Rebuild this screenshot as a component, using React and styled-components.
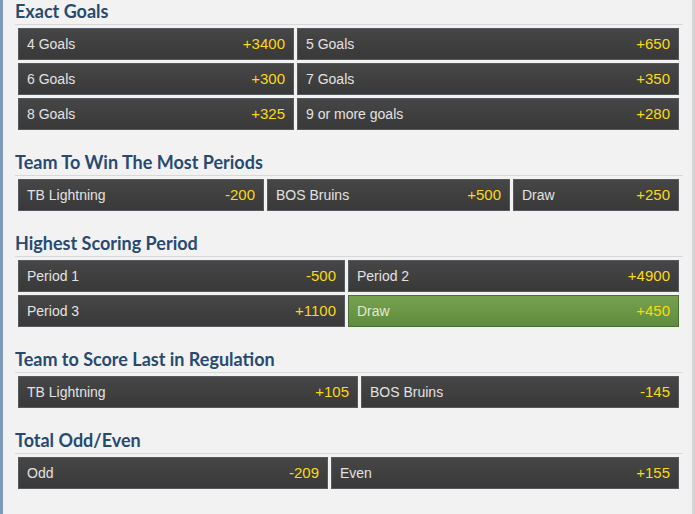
import React from 'react';
import styled, { createGlobalStyle } from 'styled-components';

const GlobalStyle = createGlobalStyle`
  html, body {
    margin: 0;
    padding: 0;
    background: #f2f2f2;
  }
`;

const Page = styled.div`
  width: 695px;
  height: 514px;
  box-sizing: border-box;
  background: #f2f2f2;
  border-left: 3px solid #8099b4;
  border-right: 3px solid #d6d6d6;
  padding: 0 9px 0 12px;
  overflow: hidden;
`;

const Market = styled.section`
  margin-bottom: 21px;
`;

const Title = styled.h2`
  margin: 0 0 3px;
  height: 24px;
  line-height: 23px;
  border-bottom: 1px solid #d8d8d8;
  font-family: 'Lato', 'Open Sans', sans-serif;
  font-weight: 700;
  font-size: 18px;
  color: #284a71;
  white-space: nowrap;
`;

const Grid = styled.div`
  display: grid;
  grid-template-columns: ${(p) => p.cols};
  gap: 3px;
  padding: 0 4px 0 3px;
`;

const Selection = styled.div`
  height: 32px;
  box-sizing: border-box;
  display: flex;
  align-items: center;
  justify-content: space-between;
  padding: 0 8px 1px 8px;
  border: 1px solid ${(p) => (p.$active ? '#4d6e36' : '#555a60')};
  background: ${(p) =>
    p.$active
      ? 'linear-gradient(#76a24f, #5f8b3e)'
      : 'linear-gradient(#464646, #393939)'};
  font-family: 'Liberation Sans', Arial, sans-serif;
  cursor: pointer;
`;

const Label = styled.span`
  font-size: 14px;
  color: ${(p) => (p.$active ? '#e0e9d2' : '#e2e2e2')};
`;

const Odds = styled.span`
  font-size: 15px;
  color: #fad915;
`;

const markets = [
  {
    title: 'Exact Goals',
    cols: '276fr 382fr',
    items: [
      ['4 Goals', '+3400'],
      ['5 Goals', '+650'],
      ['6 Goals', '+300'],
      ['7 Goals', '+350'],
      ['8 Goals', '+325'],
      ['9 or more goals', '+280'],
    ],
  },
  {
    title: 'Team To Win The Most Periods',
    cols: '246fr 243fr 166fr',
    items: [
      ['TB Lightning', '-200'],
      ['BOS Bruins', '+500'],
      ['Draw', '+250'],
    ],
  },
  {
    title: 'Highest Scoring Period',
    cols: '327fr 331fr',
    items: [
      ['Period 1', '-500'],
      ['Period 2', '+4900'],
      ['Period 3', '+1100'],
      ['Draw', '+450', true],
    ],
  },
  {
    title: 'Team to Score Last in Regulation',
    cols: '340fr 318fr',
    items: [
      ['TB Lightning', '+105'],
      ['BOS Bruins', '-145'],
    ],
  },
  {
    title: 'Total Odd/Even',
    cols: '310fr 348fr',
    items: [
      ['Odd', '-209'],
      ['Even', '+155'],
    ],
  },
];

const App = () => {
  return (
    <>
      <GlobalStyle />
      <Page>
        {markets.map((m) => (
          <Market key={m.title}>
            <Title>{m.title}</Title>
            <Grid cols={m.cols}>
              {m.items.map(([label, odds, active]) => (
                <Selection key={label + odds} $active={active}>
                  <Label $active={active}>{label}</Label>
                  <Odds>{odds}</Odds>
                </Selection>
              ))}
            </Grid>
          </Market>
        ))}
      </Page>
    </>
  );
};

export default App;
